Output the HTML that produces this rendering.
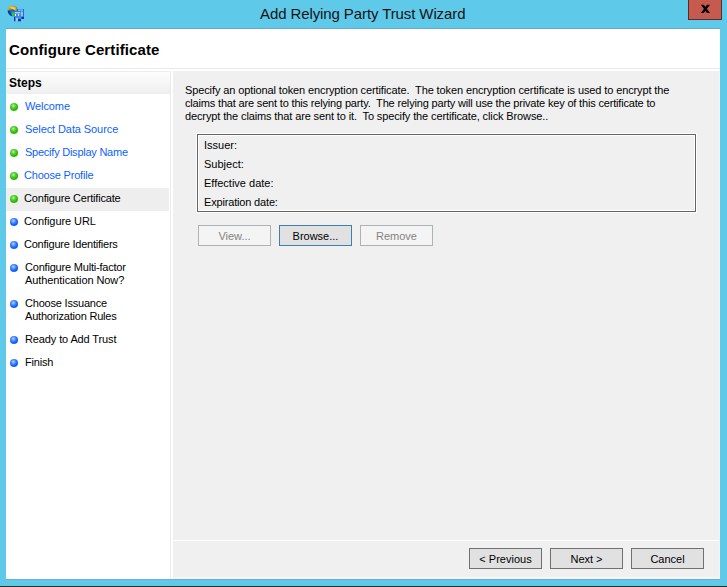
<!DOCTYPE html>
<html><head><meta charset="utf-8">
<style>
*{margin:0;padding:0;box-sizing:border-box}
html,body{width:727px;height:587px;overflow:hidden;background:#5FC9EA;font-family:"Liberation Sans",sans-serif;position:relative}
.a{position:absolute}
.t{position:absolute;white-space:pre;font-size:11px;line-height:13px;color:#000}
#title{left:260px;top:4px;font-size:15px;line-height:20px;color:#141414;letter-spacing:-0.1px}
#close{left:688px;top:0;width:34px;height:20px;background:#C75A4F;border:1px solid #5A2A24;border-top:none}
#content{left:6px;top:29px;width:714px;height:550px;background:#fff}
#hdr{left:9px;top:41px;font-size:15px;line-height:18px;font-weight:bold;color:#000;letter-spacing:0.1px}
#sep{left:6px;top:68px;width:714px;height:1px;background:#EAEAEA}
#stepshdr{left:6px;top:71px;width:165px;height:23px;border-top:1px solid #EDEDED;border-right:1px solid #EAEAEA;background:linear-gradient(#FDFDFD,#EFEFEF)}
#lborder{left:170px;top:71px;width:1px;height:508px;background:#EBEBEB}
#mainbg{left:173px;top:71px;width:547px;height:508px;background:#F6F3F0}
#main{left:173px;top:71px;width:546px;height:506px;background:#F0F0F0}
#hl{left:6px;top:188px;width:163px;height:23px;background:#EEEEEE}
.dot{position:absolute;width:8px;height:8px;border-radius:50%}
.g{background:radial-gradient(circle at 42% 35%,#C2F2B0 0,#58D034 30%,#24B800 62%,#46D000 86%,#30C400 100%)}
.b{background:radial-gradient(circle at 42% 35%,#B8D8FF 0,#4C8EFF 30%,#0A58FF 62%,#2A74FF 86%,#0050FF 100%)}
.lk{color:#0D5FFF}
.btn{position:absolute;width:73px;height:21px;border:1px solid #707070;background:#E1E1E1;font-size:11px;line-height:21px;text-align:center;color:#000}
.dis{border-color:#ADB2B5;background:#F4F4F4;color:#838383}
#box{left:196px;top:133px;width:501px;height:80px;border:1px solid #fff}
#box>div{position:absolute;left:0;top:0;right:0;bottom:0;border:1px solid #646464}
#box>div>div{position:absolute;left:0;top:0;right:0;bottom:0;border:1px solid #fff}
#footline{left:173px;top:540px;width:546px;height:1px;background:#FFFFFF}
#topshade{left:6px;top:28px;width:714px;height:1px;background:#6AAACA}
#botshade{left:6px;top:579px;width:714px;height:1px;background:#6AB0CC}
#bottomline{left:0;top:586px;width:727px;height:1px;background:#2B2B2B}
</style></head><body>
<svg class="a" style="left:6px;top:3px" width="20" height="20" viewBox="0 0 20 20">
<circle cx="7" cy="8" r="5.3" fill="#2468CC"/>
<path d="M1.9 6.4 Q2.4 3.1 6 2.8 L8.6 3.3 L10.4 4.3 L10.5 8.3 L8.6 6.9 L6.6 6.3 L4.6 6 L2.2 7.6 Z" fill="#F4A517"/>
<path d="M4 4.2 L8.2 4.6 L9.2 6.4 L7.8 6.2 L5 5.2 Z" fill="#FAD27A"/>
<path d="M3.1 5.4 L4.9 5.6 L4.7 7.2 L3.2 7.2 Z" fill="#22D022"/>
<path d="M1.8 7.6 Q2 11.6 6 13.3 L5.4 11 L4.2 8.8 L3 7.8 Z" fill="#0A30A2"/>
<path d="M5.2 9.4 L8.2 9.2 L8.6 13.1 L6.4 13.3 Z" fill="#1ED820"/>
<circle cx="11.4" cy="5.3" r="0.8" fill="#58D858"/>
<rect x="11" y="6" width="7" height="10" fill="#1E6ED6"/>
<rect x="12" y="6.6" width="5" height="1" fill="#BCD6FF"/>
<rect x="15.4" y="8.4" width="1.2" height="5" fill="#E8F2FF"/>
<rect x="15.8" y="14" width="2.2" height="2" fill="#0A2C9A"/>
<rect x="8" y="8.5" width="7" height="9.7" fill="#3A8CE6"/>
<rect x="8.8" y="9.3" width="5.4" height="1" fill="#D6E6FF"/>
<rect x="9" y="11" width="1" height="2" fill="#F4F8FF"/><rect x="12" y="11" width="1" height="2" fill="#E0ECFF"/>
<rect x="8" y="14" width="1" height="4.2" fill="#0B3AA8"/>
<rect x="10.4" y="15" width="1.2" height="3.2" fill="#E8F0FF"/>
<rect x="12" y="16.2" width="3" height="2" fill="#0A2C9A"/>
</svg>
<div class="a" id="close"></div>
<svg class="a" style="left:700px;top:4px" width="12" height="10" viewBox="0 0 12 10"><path d="M0.8 0.8 L3.8 0.8 L10 8.9 L7 8.9 Z M7 0.8 L10 0.8 L3.8 8.9 L0.8 8.9 Z" fill="#000"/></svg>
<div class="t" id="title">Add Relying Party Trust Wizard</div>
<div class="a" id="content"></div>
<div class="t" id="hdr">Configure Certificate</div>
<div class="a" id="sep"></div>
<div class="a" id="stepshdr"></div>
<div class="a" id="lborder"></div>
<div class="a" id="mainbg"></div><div class="a" id="main"></div>
<div class="a" id="hl"></div>
<div class="t" style="left:9px;top:76px;font-size:12px;line-height:14px;font-weight:bold">Steps</div>

<div class="dot g" style="left:10px;top:103px"></div><div class="t lk" style="left:25px;top:100px;letter-spacing:-0.1px">Welcome</div>
<div class="dot g" style="left:10px;top:126px"></div><div class="t lk" style="left:25px;top:123px;letter-spacing:-0.09px">Select Data Source</div>
<div class="dot g" style="left:10px;top:149px"></div><div class="t lk" style="left:25px;top:146px;letter-spacing:-0.24px">Specify Display Name</div>
<div class="dot g" style="left:10px;top:172px"></div><div class="t lk" style="left:24px;top:169px;letter-spacing:-0.2px">Choose Profile</div>
<div class="dot g" style="left:10px;top:195px"></div><div class="t" style="left:24px;top:192px;letter-spacing:-0.18px">Configure Certificate</div>
<div class="dot b" style="left:10px;top:218px"></div><div class="t" style="left:24px;top:215px;letter-spacing:-0.07px">Configure URL</div>
<div class="dot b" style="left:10px;top:241px"></div><div class="t" style="left:24px;top:238px;letter-spacing:-0.23px">Configure Identifiers</div>
<div class="dot b" style="left:10px;top:264px"></div><div class="t" style="left:25px;top:261px;letter-spacing:-0.2px">Configure Multi-factor</div>
<div class="t" style="left:25px;top:274px;letter-spacing:-0.09px">Authentication Now?</div>
<div class="dot b" style="left:10px;top:300px"></div><div class="t" style="left:25px;top:297px;letter-spacing:-0.2px">Choose Issuance</div>
<div class="t" style="left:25px;top:310px;letter-spacing:-0.2px">Authorization Rules</div>
<div class="dot b" style="left:10px;top:336px"></div><div class="t" style="left:25px;top:333px;letter-spacing:-0.12px">Ready to Add Trust</div>
<div class="dot b" style="left:10px;top:359px"></div><div class="t" style="left:25px;top:356px;letter-spacing:-0.2px">Finish</div>

<div class="t" style="left:185px;top:84px;letter-spacing:-0.113px">Specify an optional token encryption certificate.  The token encryption certificate is used to encrypt the</div>
<div class="t" style="left:185px;top:97px;letter-spacing:-0.173px">claims that are sent to this relying party.  The relying party will use the private key of this certificate to</div>
<div class="t" style="left:185px;top:110px;letter-spacing:-0.123px">decrypt the claims that are sent to it.  To specify the certificate, click Browse..</div>

<div class="a" id="box"><div><div></div></div></div>
<div class="t" style="left:204px;top:139px">Issuer:</div>
<div class="t" style="left:204px;top:158px">Subject:</div>
<div class="t" style="left:204px;top:177px">Effective date:</div>
<div class="t" style="left:204px;top:196px;letter-spacing:-0.17px">Expiration date:</div>

<div class="btn dis" style="left:198px;top:225px">View...</div>
<div class="btn" style="left:279px;top:225px;border-color:#3C7FB1">Browse...</div>
<div class="btn dis" style="left:360px;top:225px">Remove</div>

<div class="a" id="footline"></div>
<div class="btn" style="left:469px;top:548px">&lt; Previous</div>
<div class="btn" style="left:550px;top:548px">Next &gt;</div>
<div class="btn" style="left:631px;top:548px">Cancel</div>
<div class="a" id="topshade"></div><div class="a" id="botshade"></div><div class="a" id="bottomline"></div>
</body></html>
